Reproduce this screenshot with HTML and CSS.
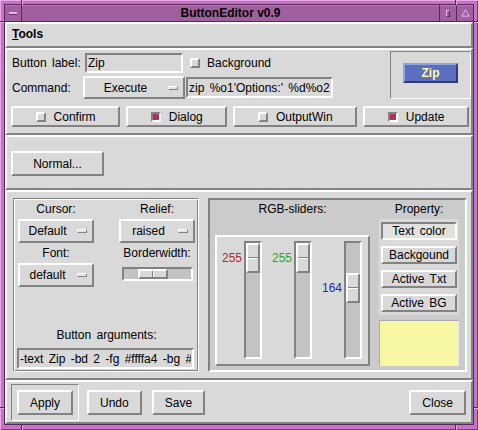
FILE: index.html
```html
<!DOCTYPE html>
<html lang="en">
  <head>
    <meta charset="UTF-8" />
    <title>ButtonEditor v0.9</title>
    <link rel="stylesheet" href="styles.css">
  </head>
  <body>
    <div class="window">
      <!-- resize notches on the window frame -->
      <span class="notch notch-v" style="left: 21px; top: 0"></span>
      <span class="notch notch-v" style="left: 455px; top: 0"></span>
      <span class="notch notch-v" style="left: 21px; top: 425px"></span>
      <span class="notch notch-v" style="left: 455px; top: 425px"></span>
      <span class="notch notch-h" style="left: 0; top: 21px"></span>
      <span class="notch notch-h" style="left: 474px; top: 21px"></span>
      <span class="notch notch-h" style="left: 0; top: 407px"></span>
      <span class="notch notch-h" style="left: 474px; top: 407px"></span>

      <div class="frame">
        <div class="titlebar">
          <div class="tb-btn tb-menu"><span class="tb-dash"></span></div>
          <div class="tb-title">ButtonEditor v0.9</div>
          <div class="tb-btn"><span class="tb-iconify"></span></div>
          <div class="tb-btn">
            <svg width="9" height="8" viewBox="0 0 9 8">
              <path d="M4.5 0.8 L8.2 7.2 H0.8 Z" fill="none" stroke="#ebb5eb" stroke-width="1" />
            </svg>
          </div>
        </div>

        <div class="client">
          <div class="section menubar"><span class="menu"><u>T</u>ools</span></div>

          <div class="section top">
            <div class="top-main">
              <div class="form">
                <div class="form-row">
                  <span class="form-label">Button label:</span>
                  <input class="entry entry-label" type="text" value="Zip" />
                  <span class="check check-bg"></span>
                  <span class="check-text">Background</span>
                </div>
                <div class="form-row row-command">
                  <span class="form-label">Command:</span>
                  <div class="menubutton mb-command">
                    <span class="mb-label">Execute</span><span class="mb-ind"></span>
                  </div>
                  <input class="entry entry-command" type="text" value="zip %o1'Options:' %d%o2" />
                </div>
              </div>
              <div class="preview">
                <button class="zip-btn">Zip</button>
              </div>
            </div>

            <div class="check-row">
              <div class="checkbutton"><span class="check"></span>Confirm</div>
              <div class="checkbutton"><span class="check on"></span>Dialog</div>
              <div class="checkbutton"><span class="check"></span>OutputWin</div>
              <div class="checkbutton"><span class="check on"></span>Update</div>
            </div>
          </div>

          <div class="section middle">
            <button class="btn btn-wide">Normal...</button>
          </div>

          <div class="section lower">
            <div class="groove options">
              <div class="opt-grid">
                <span class="opt-title">Cursor:</span>
                <span class="opt-title">Relief:</span>
                <div class="menubutton">
                  <span class="mb-label">Default</span><span class="mb-ind"></span>
                </div>
                <div class="menubutton">
                  <span class="mb-label">raised</span><span class="mb-ind"></span>
                </div>
                <span class="opt-title">Font:</span>
                <span class="opt-title">Borderwidth:</span>
                <div class="menubutton">
                  <span class="mb-label">default</span><span class="mb-ind"></span>
                </div>
                <div class="hscale">
                  <div class="hscale-handle"></div>
                </div>
              </div>
              <div class="args">
                <div class="opt-title">Button arguments:</div>
                <input class="entry entry-args" type="text" value="-text Zip -bd 2 -fg #ffffa4 -bg #5b6ec0" />
              </div>
            </div>

            <div class="colors">
              <div class="rgb">
                <div class="opt-title">RGB-sliders:</div>
                <div class="slider-box">
                  <div class="scale scale-red" style="--pos: 0px">
                    <span class="scale-value">255</span>
                    <div class="trough"><div class="handle"></div></div>
                  </div>
                  <div class="scale scale-green" style="--pos: 0px">
                    <span class="scale-value">255</span>
                    <div class="trough"><div class="handle"></div></div>
                  </div>
                  <div class="scale scale-blue" style="--pos: 30px">
                    <span class="scale-value">164</span>
                    <div class="trough"><div class="handle"></div></div>
                  </div>
                </div>
              </div>
              <div class="property">
                <div class="opt-title">Property:</div>
                <div class="prop-list">
                  <div class="prop-btn active">Text color</div>
                  <div class="prop-btn">Backgound</div>
                  <div class="prop-btn">Active Txt</div>
                  <div class="prop-btn">Active BG</div>
                </div>
                <div class="swatch"></div>
              </div>
            </div>
          </div>

          <div class="section actions">
            <div class="default-ring"><button class="btn">Apply</button></div>
            <button class="btn btn-undo">Undo</button>
            <button class="btn btn-save">Save</button>
            <button class="btn btn-close">Close</button>
          </div>
        </div>
      </div>
    </div>
  </body>
</html>
```

FILE: styles.css
```css
body {
  margin: 0;
  font-family: "Liberation Sans", Arial, sans-serif;
  font-size: 12px;
  line-height: 14px;
  word-spacing: 2px;
  color: #000;
}

/* window manager frame */
.window {
  position: relative;
  display: flex;
  width: 478px;
  height: 430px;
  box-sizing: border-box;
  padding: 4px 4px 5px 4px;
  background: #c574c5;
  box-shadow: inset 1px 1px #eaa8ea, inset -1px -1px #7b3a7b;
}
.notch {
  position: absolute;
  box-sizing: border-box;
}
.notch-v {
  width: 2px;
  height: 5px;
  border-left: 1px solid #5b275b;
  border-right: 1px solid #e6a6e6;
}
.notch-h {
  width: 4px;
  height: 2px;
  border-top: 1px solid #5b275b;
  border-bottom: 1px solid #e6a6e6;
}
.frame {
  flex: 1;
  display: flex;
  flex-direction: column;
  border: 1px solid #5b275b;
}
.titlebar {
  display: flex;
  height: 16px;
  background: #a0609f;
  border-bottom: 1px solid #5b275b;
  box-shadow: inset 0 1px #b878b8;
}
.tb-btn {
  width: 16px;
  display: flex;
  align-items: center;
  justify-content: center;
  border-left: 1px solid #5b275b;
}
.tb-menu {
  border-left: none;
  border-right: 1px solid #5b275b;
}
.tb-dash {
  width: 8px;
  height: 2px;
  background: #eeb0ee;
  border-bottom: 1px solid #6a306a;
}
.tb-iconify {
  width: 4px;
  height: 7px;
  box-sizing: border-box;
  border: 1px solid;
  border-color: #ebb5eb #5b275b #5b275b #ebb5eb;
}
.tb-title {
  flex: 1;
  text-align: center;
  font-weight: bold;
  line-height: 16px;
  word-spacing: 0;
}

/* application area */
.client {
  flex: 1;
  display: flex;
  flex-direction: column;
  background: #d9d9d9;
}
.section {
  border: 2px solid;
  border-color: #fff #828282 #828282 #fff;
}
.menubar {
  height: 26px;
  box-sizing: border-box;
  padding: 3px 0 0 5px;
  font-weight: bold;
}

/* raised / sunken widgets */
.entry {
  box-sizing: border-box;
  margin: 0;
  padding: 0 1px;
  font: inherit;
  word-spacing: inherit;
  color: #000;
  background: #d9d9d9;
  border: 2px solid;
  border-color: #828282 #fff #fff #828282;
  outline: none;
}
.menubutton {
  display: flex;
  align-items: center;
  box-sizing: border-box;
  height: 24px;
  padding: 0 5px 0 2px;
  border: 2px solid;
  border-color: #fff #828282 #828282 #fff;
}
.mb-label {
  flex: 1;
  text-align: center;
}
.mb-ind {
  width: 10px;
  height: 4px;
  box-sizing: border-box;
  margin-left: 4px;
  background: #e4e4e4;
  border: 1px solid;
  border-color: #fff #828282 #828282 #fff;
}
.check {
  width: 10px;
  height: 10px;
  box-sizing: border-box;
  border: 2px solid;
  border-color: #fff #828282 #828282 #fff;
  background: #d9d9d9;
}
.check.on {
  background: #b03060;
  border-color: #828282 #fff #fff #828282;
}
.btn {
  box-sizing: border-box;
  height: 25px;
  margin: 0;
  padding: 0 11px;
  font: inherit;
  color: #000;
  background: #d9d9d9;
  border: 2px solid;
  border-color: #fff #828282 #828282 #fff;
}

/* top: label, command and flags */
.top {
  padding: 0 0 6px 4px;
}
.top-main {
  display: flex;
}
.form {
  padding: 3px 0 0 1px;
}
.form-row {
  display: flex;
  align-items: center;
  height: 20px;
}
.form-label {
  width: 71px;
}
.entry-label {
  width: 98px;
  height: 20px;
  margin-left: 2px;
}
.check-bg {
  margin-left: 7px;
}
.check-text {
  margin-left: 7px;
}
.row-command {
  height: 23px;
  margin-top: 3px;
}
.mb-command {
  width: 102px;
  height: 23px;
}
.entry-command {
  width: 147px;
  height: 21px;
  margin-left: 1px;
}
.preview {
  display: flex;
  justify-content: center;
  align-items: flex-start;
  width: 81px;
  height: 48px;
  box-sizing: border-box;
  margin: 1px 0 0 auto;
  padding-top: 11px;
  border: 1px solid;
  border-color: #828282 #fff #fff #828282;
}
.zip-btn {
  width: 55px;
  height: 20px;
  margin: 0;
  padding: 0;
  font: inherit;
  font-weight: bold;
  color: #ffffa4;
  background: #5b6ec0;
  border: 2px solid;
  border-color: #93a2e2 #2f3b73 #2f3b73 #93a2e2;
}
.check-row {
  display: flex;
  gap: 6px;
  margin-top: 7px;
  padding-right: 2px;
}
.checkbutton {
  flex: 1 1 auto;
  display: flex;
  align-items: center;
  justify-content: center;
  gap: 8px;
  height: 21px;
  box-sizing: border-box;
  border: 2px solid;
  border-color: #fff #828282 #828282 #fff;
}

.middle {
  padding: 14px 0 12px 4px;
}
.btn-wide {
  width: 93px;
}

/* lower: button options and colours */
.lower {
  flex: 1;
  display: flex;
  gap: 9px;
  padding: 6px 4px 6px 6px;
}
.groove {
  border: 1px solid;
  border-color: #828282 #fff #fff #828282;
  box-shadow: inset 1px 1px #fff, inset -1px -1px #828282;
}
.options {
  width: 186px;
  box-sizing: border-box;
  display: flex;
  flex-direction: column;
  padding: 3px 3px 2px 4px;
}
.opt-grid {
  display: grid;
  grid-template-columns: 76px 76px;
  justify-content: space-between;
  grid-template-rows: 14px 24px 14px 24px;
  row-gap: 3px;
}
.opt-title {
  text-align: center;
}
.hscale {
  display: flex;
  align-items: center;
  height: 14px;
  box-sizing: border-box;
  margin: 4px 2px 0 3px;
  background: #c3c3c3;
  border: 2px solid;
  border-color: #828282 #fff #fff #828282;
}
.hscale-handle {
  display: flex;
  width: 30px;
  height: 10px;
  box-sizing: border-box;
  margin-left: 14px;
  background: #d9d9d9;
  border: 2px solid;
  border-color: #fff #828282 #828282 #fff;
}
.hscale-handle::after {
  content: "";
  width: 1px;
  margin-left: 12px;
  background: #828282;
  border-right: 1px solid #fff;
}
.args {
  margin-top: auto;
}
.entry-args {
  display: block;
  width: 177px;
  height: 21px;
  margin: 6px 0 0 -1px;
}

.colors {
  flex: 1;
  display: grid;
  grid-template-columns: 155px 80px;
  column-gap: 9px;
  padding: 2px 5px 0 5px;
  background: #cbcbcb;
  border: 2px solid;
  border-color: #828282 #fff #fff #828282;
}
.rgb,
.property {
  display: flex;
  flex-direction: column;
}
.slider-box {
  display: flex;
  gap: 8px;
  height: 131px;
  box-sizing: border-box;
  margin-top: 19px;
  padding: 4px 0 0 3px;
  background: #d9d9d9;
  border: 2px solid;
  border-color: #fff #828282 #828282 #fff;
}
.scale {
  display: flex;
  align-items: flex-start;
}
.scale-value {
  width: 22px;
  padding-right: 2px;
  text-align: right;
  margin-top: calc(var(--pos) + 10px);
}
.scale-red .scale-value {
  color: #b02828;
}
.scale-green .scale-value {
  color: #28a828;
}
.scale-blue .scale-value {
  color: #2828b0;
}
.trough {
  width: 18px;
  height: 118px;
  box-sizing: border-box;
  background: #c3c3c3;
  border: 2px solid;
  border-color: #828282 #fff #fff #828282;
}
.handle {
  height: 30px;
  box-sizing: border-box;
  margin-top: var(--pos);
  background: #d9d9d9;
  border: 2px solid;
  border-color: #fff #828282 #828282 #fff;
}
.handle::after {
  content: "";
  display: block;
  height: 1px;
  margin-top: 12px;
  background: #828282;
  border-bottom: 1px solid #fff;
}
.prop-list {
  display: flex;
  flex-direction: column;
  gap: 6px;
  margin-top: 3px;
  padding: 3px 2px;
  background: #d9d9d9;
}
.prop-btn {
  height: 18px;
  box-sizing: border-box;
  text-align: center;
  border: 2px solid;
  border-color: #fff #828282 #828282 #fff;
}
.prop-btn.active {
  background: #e0e2e0;
  border-color: #828282 #fff #fff #828282;
}
.swatch {
  height: 46px;
  box-sizing: border-box;
  margin-top: 5px;
  background: #f8f8a4;
  border: 1px solid;
  border-color: #a8a8a8 #ececec #ececec #a8a8a8;
}

/* bottom button bar */
.actions {
  display: flex;
  align-items: flex-start;
  height: 44px;
  box-sizing: border-box;
  padding: 2px 5px 0 4px;
}
.default-ring {
  padding: 5px;
  border: 1px solid;
  border-color: #828282 #fff #fff #828282;
}
.btn-undo {
  margin: 6px 0 0 8px;
}
.btn-save {
  margin: 6px 0 0 10px;
}
.btn-close {
  margin: 6px 0 0 auto;
}
```
